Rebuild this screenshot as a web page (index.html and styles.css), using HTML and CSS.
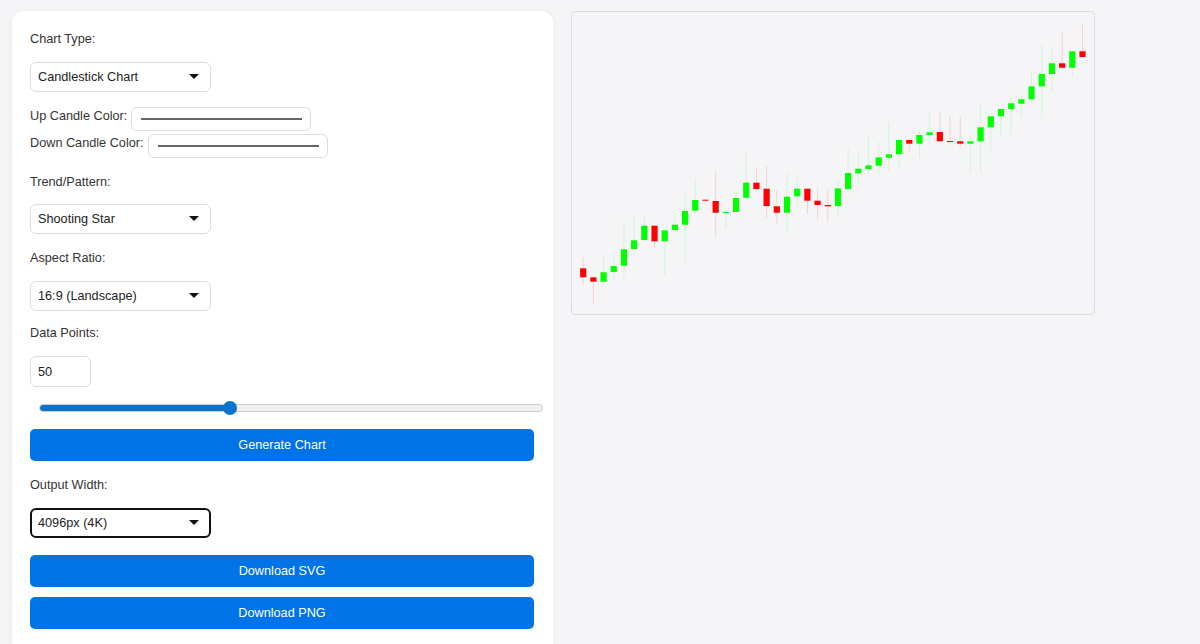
FILE: index.html
```html
<!DOCTYPE html>
<html lang="en">
<head>
    <meta charset="UTF-8">
    <meta name="viewport" content="width=device-width, initial-scale=1.0">
    <title>Candlestick Chart Generator</title>
    <link rel="stylesheet" href="styles.css">
</head>
<body>
    <!-- Controls -->
    <div class="panel">
        <label class="field-label" for="chart-type">Chart Type:</label>
        <div class="select-wrap">
            <select id="chart-type">
                <option>Candlestick Chart</option>
                <option>Line Chart</option>
            </select>
        </div>

        <div class="color-row">
            <label for="up-color">Up Candle Color:</label>
            <input type="color" id="up-color" value="#00ff00">
        </div>
        <div class="color-row last">
            <label for="down-color">Down Candle Color:</label>
            <input type="color" id="down-color" value="#ff0000">
        </div>

        <label class="field-label short" for="trend">Trend/Pattern:</label>
        <div class="select-wrap">
            <select id="trend">
                <option>Shooting Star</option>
                <option>Hammer</option>
            </select>
        </div>

        <label class="field-label" for="aspect">Aspect Ratio:</label>
        <div class="select-wrap tight">
            <select id="aspect">
                <option>16:9 (Landscape)</option>
                <option>1:1 (Square)</option>
            </select>
        </div>

        <label class="field-label" for="points">Data Points:</label>
        <input type="number" id="points" value="50">
        <input type="range" id="points-range" min="20" max="100" value="50">

        <button class="action generate">Generate Chart</button>

        <label class="field-label" for="output-width">Output Width:</label>
        <div class="select-wrap focused">
            <select id="output-width">
                <option>4096px (4K)</option>
                <option>1920px (HD)</option>
            </select>
        </div>

        <button class="action download">Download SVG</button>
        <button class="action">Download PNG</button>
    </div>

    <!-- Chart output -->
    <div class="chart-box">
        <svg id="chart" width="522" height="302" viewBox="572 12 522 302"></svg>
    </div>

    <script src="chart.js"></script>
</body>
</html>
```

FILE: styles.css
```css
* {
    box-sizing: border-box;
}
body {
    font-family: 'Liberation Sans', Arial, sans-serif;
    font-size: 12.7px;
    color: #333;
    margin: 0;
    padding: 11px 12px 0;
    display: flex;
    align-items: flex-start;
    gap: 18px;
    background-color: #f5f5f7;
}
.panel {
    width: 541px;
    flex-shrink: 0;
    padding: 19px 18px 18px;
    background: white;
    border-radius: 12px;
    box-shadow: 0 2px 8px rgba(0,0,0,0.05);
}
.field-label {
    display: block;
    line-height: 16px;
    padding-top: 1px;
    margin-bottom: 15px;
}
.field-label.short {
    margin-bottom: 14px;
}
.select-wrap {
    position: relative;
    width: 181px;
    margin-bottom: 15px;
}
.select-wrap.tight {
    margin-bottom: 13px;
}
/* arrow sits over the select */
.select-wrap::after {
    content: "";
    position: absolute;
    top: 12px;
    right: 12px;
    width: 0;
    height: 0;
    border-left: 5px solid transparent;
    border-right: 5px solid transparent;
    border-top: 5px solid #111;
    pointer-events: none;
}
select {
    display: block;
    width: 100%;
    height: 30px;
    padding: 0 7px;
    font: inherit;
    color: #222;
    background: white;
    border: 1px solid #ddd;
    border-radius: 6px;
    appearance: none;
}
.focused {
    margin-bottom: 17px;
}
.focused select {
    border: 2px solid #111;
    padding: 0 6px;
}
.color-row {
    display: flex;
    align-items: flex-start;
    gap: 4px;
    height: 24px;
    margin-bottom: 3px;
}
.color-row.last {
    margin-bottom: 15px;
}
.color-row label {
    line-height: 16px;
    padding-top: 1px;
}
input[type="color"] {
    width: 180px;
    height: 24px;
    padding: 10px 8px 10px 9px;
    background: white;
    border: 1px solid #ddd;
    border-radius: 6px;
    appearance: none;
}
input[type="color"]::-webkit-color-swatch-wrapper {
    padding: 0;
}
input[type="color"]::-webkit-color-swatch {
    border: none;
    background-color: #666 !important;
}
input[type="number"] {
    display: block;
    width: 61px;
    height: 31px;
    padding: 0 7px;
    margin-bottom: 13px;
    font: inherit;
    color: #222;
    border: 1px solid #ddd;
    border-radius: 6px;
    appearance: textfield;
}
input[type="range"] {
    display: block;
    width: 504px;
    height: 16px;
    margin: 0 0 13px 9px;
    background: transparent;
    appearance: none;
}
input[type="range"]::-webkit-slider-runnable-track {
    height: 8px;
    background: linear-gradient(to right, #0b73cb 38%, #efefef 38%);
    border: 1px solid #ccc;
    border-radius: 4px;
}
input[type="range"]::-webkit-slider-thumb {
    width: 14px;
    height: 14px;
    margin-top: -4px;
    background: #0b73cb;
    border-radius: 50%;
    appearance: none;
}
.action {
    display: block;
    width: 504px;
    height: 32px;
    font: inherit;
    color: white;
    background-color: #0073e6;
    border: none;
    border-radius: 5px;
    margin-bottom: 10px;
    cursor: pointer;
}
.generate {
    margin-bottom: 15px;
}
.chart-box {
    width: 524px;
    height: 304px;
    flex-shrink: 0;
    border: 1px solid #ddd;
    border-radius: 4px;
}
.chart-box svg {
    display: block;
}
```

FILE: chart.js
```js
// [body top, body bottom, wick top, wick bottom, up?]
const candles = [
    [268.3, 277.3, 257.3, 285, 0],
    [277.3, 281.7, 277.3, 303.3, 0],
    [272.3, 281.7, 256.7, 281.7, 1],
    [266, 272, 252.7, 280, 1],
    [249.3, 265.7, 221.7, 278.3, 1],
    [240.3, 249, 216.7, 249, 1],
    [225.7, 240, 215.7, 240, 1],
    [225.7, 241.3, 225.7, 248.3, 0],
    [230.3, 241.3, 230.3, 275, 1],
    [224.7, 230, 216.7, 230, 1],
    [211, 224.7, 192.7, 261.7, 1],
    [200, 210.7, 178.3, 213.3, 1],
    [199.7, 200.7, 199.7, 201.7, 0],
    [201, 212.7, 170.7, 237.3, 0],
    [212, 213, 206.7, 228.3, 1],
    [198, 212, 188.3, 212, 1],
    [182.7, 197.7, 154, 197.7, 1],
    [182.7, 189, 168.3, 189, 0],
    [188.7, 206, 166, 218.3, 0],
    [206.3, 212.7, 190, 223.3, 0],
    [196.7, 212.7, 173.3, 233.3, 1],
    [188.7, 196.3, 176.7, 206.7, 1],
    [188.7, 200.7, 188.7, 214, 0],
    [200.7, 205, 188.3, 220, 0],
    [205, 206.3, 189.3, 221.7, 0],
    [188.3, 206, 180, 218.3, 1],
    [173, 189, 148.3, 195, 1],
    [168.7, 173.3, 153.3, 185, 1],
    [165.3, 169, 135, 175, 1],
    [157.3, 165.7, 141.7, 175, 1],
    [154.3, 157.7, 121.7, 171, 1],
    [140, 154.3, 140, 167.7, 1],
    [140, 143.7, 140, 151, 0],
    [135, 143.7, 130, 158, 1],
    [132.3, 135, 112.3, 143.3, 1],
    [132, 141.3, 112.3, 141.3, 0],
    [141, 142, 116, 145, 0],
    [141.3, 143.7, 116, 148, 0],
    [141.3, 143.7, 133, 171.7, 1],
    [127.3, 141.3, 104.3, 173.3, 1],
    [116.3, 127.3, 116.3, 150.7, 1],
    [109, 116.3, 109, 135.7, 1],
    [103.3, 109, 96.7, 135, 1],
    [99.3, 103.7, 95, 116, 1],
    [86.3, 99.3, 72.7, 103.3, 1],
    [74, 86.3, 44.3, 118.3, 1],
    [63.3, 74, 46.7, 92.3, 1],
    [63.3, 67.7, 32.3, 67.7, 0],
    [51.3, 67.7, 51.3, 76.7, 1],
    [51.3, 57, 24.3, 57, 0]
];

const svgNS = 'http://www.w3.org/2000/svg';
const chart = document.getElementById('chart');

function add(tag, attrs) {
    const el = document.createElementNS(svgNS, tag);
    Object.keys(attrs).forEach(key => el.setAttribute(key, attrs[key]));
    chart.appendChild(el);
}

candles.forEach((c, i) => {
    const x = 583.2 + i * 10.19;
    const color = c[4] ? '#00ff00' : '#ff0000';
    add('line', { x1: x, x2: x, y1: c[2], y2: c[3], stroke: color, 'stroke-width': 1, 'stroke-opacity': 0.15 });
    add('rect', { x: x - 3.1, y: c[0], width: 6.2, height: c[1] - c[0], fill: color });
});
```
